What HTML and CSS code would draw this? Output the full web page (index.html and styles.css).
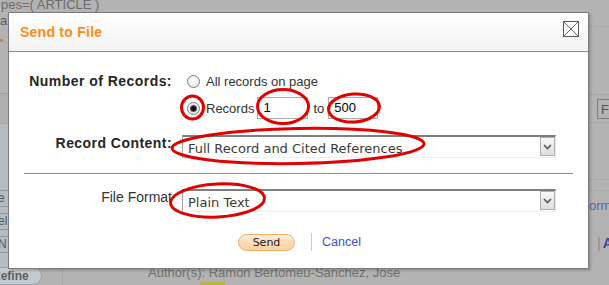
FILE: index.html
```html
<!DOCTYPE html>
<html>
<head>
<meta charset="utf-8">
<title>Send to File</title>
<link rel="stylesheet" href="styles.css">
</head>
<body>
<div class="page">
  <div class="topline">pes=( ARTICLE )</div>
  <div class="cols">
    <aside class="side">
      <div class="side-top"><span class="ab">ab</span><span class="mark"></span></div>
      <div class="side-band"></div>
      <div class="side-panel">
        <div class="sbox">e</div>
        <div class="sbox">el</div>
        <div class="sbox">N</div>
      </div>
      <div class="refine">Refine</div>
    </aside>
    <main class="main">
      <div class="main-top">
        <div class="rail">
          <div class="rail-head"></div>
          <div class="rail-row"><span class="rail-btn">F</span></div>
          <div class="rail-band"></div>
          <div class="rail-link">Format</div>
          <div class="rail-add"><span class="pipe">|</span><b>Add</b></div>
        </div>
      </div>
      <div class="author">Author(s): Ramon Bertomeu-Sanchez, Jose</div>
      <div class="source"><b>Source:</b> <span class="hl">ISIS</span> <b>Volume:</b> 104 <b>Issue:</b> 2 <b>Pages:</b> 187-200</div>
    </main>
  </div>
</div>

<div class="modal">
  <div class="modal-head">
    <span class="title">Send to File</span>
    <svg class="close" width="16" height="16" viewBox="0 0 16 16">
      <rect x="0.5" y="0.5" width="15" height="15" fill="#fdfdfd" stroke="#5a5a5a"/>
      <path d="M1 1 L15 15 M15 1 L1 15" stroke="#6a6a6a" stroke-width="1"/>
    </svg>
  </div>
  <div class="modal-body">
    <div class="row">
      <div class="label">Number of Records:</div>
      <div class="ctrl">
        <div class="opt">
          <span class="radio"></span>
          <span class="opt-text">All records on page</span>
        </div>
        <div class="opt opt-range">
          <span class="radio on"></span>
          <span class="opt-text">Records</span>
          <span class="field first">1</span>
          <span class="to">to</span>
          <span class="field last">500</span>
        </div>
      </div>
    </div>
    <div class="row row-content">
      <div class="label">Record Content:</div>
      <div class="select">
        <span class="select-text">Full Record and Cited References</span>
        <span class="select-btn"><svg width="9" height="6" viewBox="0 0 9 6"><path d="M1 1 L4.5 4.5 L8 1" fill="none" stroke="#555" stroke-width="1.6"/></svg></span>
      </div>
    </div>
    <div class="divider"></div>
    <div class="row row-format">
      <div class="label plain">File Format</div>
      <div class="select">
        <span class="select-text">Plain Text</span>
        <span class="select-btn"><svg width="9" height="6" viewBox="0 0 9 6"><path d="M1 1 L4.5 4.5 L8 1" fill="none" stroke="#555" stroke-width="1.6"/></svg></span>
      </div>
    </div>
    <div class="actions">
      <span class="send">Send</span>
      <span class="sep"></span>
      <span class="cancel">Cancel</span>
    </div>
  </div>
</div>

<svg class="marks" width="609" height="285" viewBox="0 0 609 285">
  <g fill="none" stroke="#e00000" stroke-width="3">
    <ellipse cx="192.5" cy="107.5" rx="11" ry="11.5"/>
    <ellipse cx="283" cy="106.5" rx="25.5" ry="17"/>
    <ellipse cx="354" cy="108" rx="25.5" ry="14" transform="rotate(-4 354 108)"/>
    <ellipse cx="298" cy="146" rx="126" ry="17.5" transform="rotate(-1 298 146)"/>
    <ellipse cx="217.5" cy="200.5" rx="47" ry="16.5" transform="rotate(-3 217.5 200.5)"/>
  </g>
</svg>
</body>
</html>
```

FILE: styles.css
```css
html, body {
  margin: 0;
  padding: 0;
}

body {
  width: 609px;
  height: 285px;
  overflow: hidden;
  position: relative;
  background: #b3b3b3;
  font-family: "Liberation Sans", Arial, sans-serif;
  color: #333;
}

/* ---------- dimmed page behind ---------- */
.page {
  width: 609px;
  height: 285px;
  display: flex;
  flex-direction: column;
  overflow: hidden;
}

.topline {
  height: 12px;
  flex: none;
  font-size: 13px;
  line-height: 10px;
  color: #6c6c6c;
  padding-left: 1px;
  white-space: nowrap;
  overflow: hidden;
}

.cols {
  flex: 1;
  display: flex;
  min-height: 0;
}

.side {
  width: 62px;
  flex: none;
  display: flex;
  flex-direction: column;
  border-right: 1px solid #a3a7ab;
  overflow: hidden;
}

.side > * {
  flex: none;
}

.side-top {
  height: 81px;
  display: flex;
  flex-direction: column;
  padding-top: 2px;
  box-sizing: border-box;
}

.ab {
  font-size: 13px;
  line-height: 14px;
  color: #5d5d5d;
}

.mark {
  width: 3px;
  height: 3px;
  margin-top: 11px;
  background: #b88a5a;
}

.side-band {
  height: 29px;
  border-top: 1px solid #a0a0a0;
  border-bottom: 1px solid #a5a5a5;
  background: #b0b0b0;
}

.side-panel {
  height: 143px;
  background: #b6bbc0;
  display: flex;
  flex-direction: column;
  gap: 6px;
  padding-top: 66px;
  box-sizing: border-box;
}

.sbox {
  height: 15px;
  border-top: 1px solid #8f99a4;
  border-bottom: 1px solid #8f99a4;
  font-size: 12px;
  line-height: 15px;
  color: #555c63;
  text-indent: -2px;
}

.refine {
  height: 18px;
  width: 42px;
  box-sizing: border-box;
  border: 1px solid #95a0aa;
  border-left: none;
  border-radius: 0 9px 9px 0;
  background: #c2c9cf;
  font-size: 12px;
  font-weight: bold;
  line-height: 16px;
  color: #5a5f64;
  text-indent: -8px;
  white-space: nowrap;
  overflow: hidden;
}

.main {
  flex: 1;
  display: flex;
  flex-direction: column;
  min-width: 0;
}

.main > * {
  flex: none;
}

.main-top {
  height: 254px;
  display: flex;
  justify-content: flex-end;
}

.rail {
  width: 60px;
  display: flex;
  flex-direction: column;
}

.rail-head {
  height: 14px;
  border-bottom: 1px solid #a8a8a8;
}

.rail-row {
  margin-top: 67px;
  height: 27px;
  border-top: 1px solid #a5a5a5;
  border-bottom: 1px solid #a5a5a5;
  display: flex;
  align-items: center;
  padding-left: 48px;
}

.rail-btn {
  width: 16px;
  height: 20px;
  border: 1px solid #7d7d7d;
  font-size: 13px;
  line-height: 20px;
  color: #555;
  padding-left: 3px;
  box-sizing: border-box;
}

.rail-band {
  margin-top: 56px;
  height: 10px;
  border-top: 1px solid #a8a8a8;
  border-bottom: 1px solid #a8a8a8;
}

.rail-link {
  margin-top: 8px;
  padding-left: 32px;
  font-size: 13px;
  line-height: 14px;
  color: #5a64b6;
  white-space: nowrap;
}

.rail-add {
  margin-top: 22px;
  padding-left: 48px;
  font-size: 14px;
  line-height: 16px;
  white-space: nowrap;
  color: #3e4a9a;
}

.pipe {
  color: #8a8a8a;
  font-weight: normal;
  margin-right: 2px;
}

.author {
  padding-left: 85px;
  font-size: 13px;
  line-height: 14px;
  color: #707070;
  white-space: nowrap;
}

.source {
  padding-left: 85px;
  font-size: 13px;
  line-height: 14px;
  color: #3a3a3a;
  white-space: nowrap;
  padding-top: 3px;
}

.hl {
  background: #b7b148;
}

/* ---------- modal ---------- */
.modal {
  position: absolute;
  left: 8px;
  top: 12px;
  width: 581px;
  height: 257px;
  box-sizing: border-box;
  background: #fff;
  border: 1px solid #7a7a7a;
  box-shadow: 2px 2px 2px rgba(0, 0, 0, 0.18);
  display: flex;
  flex-direction: column;
}

.modal-head {
  height: 39px;
  box-sizing: border-box;
  border-bottom: 1px solid #8a8a8a;
  background: linear-gradient(#ffffff, #f3f3f3);
  display: flex;
  align-items: flex-start;
  justify-content: space-between;
  padding: 11px 9px 0 11px;
}

.title {
  font-size: 14px;
  font-weight: bold;
  letter-spacing: 0.25px;
  line-height: 16px;
  color: #ff8c1a;
}

.close {
  display: block;
  margin-top: -3px;
}

.modal-body {
  flex: 1;
  display: flex;
  flex-direction: column;
  padding-top: 21px;
}

.row {
  display: flex;
  align-items: flex-start;
}

.label {
  width: 163px;
  flex: none;
  text-align: right;
  font-size: 14px;
  font-weight: bold;
  letter-spacing: 0.45px;
  line-height: 16px;
  color: #262626;
}

.label.plain {
  font-weight: normal;
  letter-spacing: 0;
  color: #333;
}

.ctrl {
  margin-left: 10px;
  display: flex;
  flex-direction: column;
  gap: 8px;
}

.opt {
  display: flex;
  align-items: center;
  height: 16px;
  padding-left: 5px;
  font-size: 13px;
  color: #333;
}

.opt-range {
  height: 22px;
}

.radio {
  width: 13px;
  height: 13px;
  flex: none;
  box-sizing: border-box;
  border-radius: 50%;
  border: 1px solid #7c7c7c;
  background: radial-gradient(circle at 50% 40%, #ffffff, #e2e2e2);
  display: flex;
  align-items: center;
  justify-content: center;
  margin-right: 6px;
}

.radio.on::after {
  content: "";
  width: 5px;
  height: 5px;
  border-radius: 50%;
  background: #111;
  box-shadow: 0 0 0 1px #555;
}

.field {
  height: 22px;
  box-sizing: border-box;
  border: 1px solid #ababab;
  background: #fff;
  font-size: 13px;
  line-height: 20px;
  color: #000;
  padding-left: 5px;
}

.field.first {
  width: 51px;
  margin-left: 3px;
}

.field.last {
  width: 50px;
}

.to {
  margin: 0 4px 0 5px;
}

.row-content {
  margin-top: 16px;
}

.select {
  margin-left: 10px;
  width: 374px;
  height: 23px;
  box-sizing: border-box;
  border-top: 2px solid #7e7e7e;
  border-left: 1px solid #a2a2a2;
  border-right: 1px solid #e6e6e6;
  border-bottom: 1px solid #efefef;
  display: flex;
  align-items: center;
  justify-content: space-between;
  padding-left: 5px;
}

.select-text {
  font-family: "DejaVu Sans", Verdana, sans-serif;
  font-size: 13px;
  color: #3a3a3a;
  line-height: 16px;
  padding-top: 3px;
}

.select-btn {
  width: 15px;
  height: 19px;
  box-sizing: border-box;
  border: 1px solid #aeaeae;
  background: linear-gradient(#f7f7f7, #dedede);
  display: flex;
  align-items: center;
  justify-content: center;
  align-self: flex-start;
}

.divider {
  margin: 15px 15px 0 15px;
  height: 1px;
  background: #8c8c8c;
}

.row-format {
  margin-top: 15px;
}

.actions {
  margin-top: 21px;
  padding-left: 229px;
  display: flex;
  align-items: center;
}

.send {
  width: 57px;
  height: 17px;
  box-sizing: border-box;
  border: 1px solid #f3ad62;
  border-radius: 9px;
  background: linear-gradient(#fff1e2 0%, #fddcb8 45%, #fcd2a6 100%);
  font-family: "DejaVu Sans", Verdana, sans-serif;
  font-size: 11px;
  line-height: 15px;
  text-align: center;
  color: #222;
}

.sep {
  width: 1px;
  height: 18px;
  background: #c9c9c9;
  margin-left: 16px;
}

.cancel {
  margin-left: 10px;
  font-size: 12.5px;
  color: #3f4fd4;
}

.marks {
  position: absolute;
  left: 0;
  top: 0;
  pointer-events: none;
}
```
